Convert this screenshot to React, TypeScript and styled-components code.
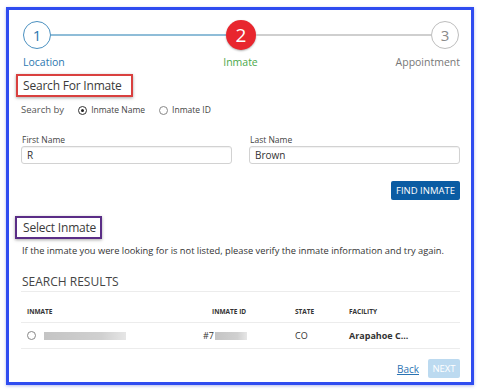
import React from 'react';
import styled, { createGlobalStyle } from 'styled-components';

const GlobalStyle = createGlobalStyle`
	body {
		margin: 0;
		background: #ffffff;
		font-family: 'Open Sans', 'Liberation Sans', sans-serif;
		color: #333;
	}
`;

const Page = styled.div`
	padding: 7px 5px 7px 6px;
`;

const Frame = styled.div`
	width: 468px;
	height: 378px;
	box-sizing: border-box;
	border: 3px solid #2f4cf0;
	box-shadow: 0 1px 3px rgba(40, 60, 200, 0.35);
	padding: 10px 11px 0 12px;
	display: flex;
	flex-direction: column;
`;

const StepRow = styled.div`
	display: flex;
	align-items: center;
	padding: 0 1px 0 2px;
`;

const Circle = styled.div<{ $state: 'done' | 'active' | 'todo' }>`
	width: 28px;
	height: 28px;
	box-sizing: border-box;
	border-radius: 50%;
	display: flex;
	align-items: center;
	justify-content: center;
	border: ${(p) => (p.$state === 'active' ? 'none' : '1.5px solid')};
	border-color: ${(p) => (p.$state === 'done' ? '#4a90c0' : '#bdbdbd')};
	background: ${(p) => (p.$state === 'active' ? '#e8262e' : '#fff')};
	color: ${(p) => (p.$state === 'active' ? '#fff' : p.$state === 'done' ? '#2d78b0' : '#8a8a8a')};
	font-size: ${(p) => (p.$state === 'active' ? '19px' : '15px')};
	box-shadow: ${(p) => (p.$state === 'active' ? '0 1px 2px rgba(0,0,0,0.3)' : 'none')};
	${(p) => p.$state === 'active' && 'width: 30px; height: 30px;'}
`;

const Connector = styled.div<{ $done?: boolean }>`
	flex: 1;
	height: 1.5px;
	background: ${(p) => (p.$done ? '#8fbdd8' : '#cfcfcf')};
`;

const LabelRow = styled.div`
	display: grid;
	grid-template-columns: 1fr auto 1fr;
	margin-top: 5px;
	font-size: 10.5px;
	line-height: 14px;
`;

const StepLabel = styled.div<{ $align: string; $color: string }>`
	justify-self: ${(p) => p.$align};
	color: ${(p) => p.$color};
	padding-left: ${(p) => (p.$align === 'start' ? '2px' : '0')};
`;

const Heading = styled.div<{ $box: string }>`
	align-self: flex-start;
	margin-top: 5px;
	margin-left: -5px;
	padding: 2px 9px 2px 5px;
	border: 2px solid ${(p) => p.$box};
	box-shadow: 0 1px 3px rgba(0, 0, 0, 0.35);
	font-size: 12px;
	letter-spacing: -0.2px;
	line-height: 15px;
	color: #3a3a3a;
`;

const SearchBy = styled.div`
	display: flex;
	align-items: center;
	margin-top: 6px;
	font-size: 9.5px;
	color: #555;
	line-height: 14px;
`;

const RadioOption = styled.label`
	display: flex;
	align-items: center;
	gap: 4px;
	margin-left: 14px;
	font-size: 8.5px;
	color: #444;
`;

const Radio = styled.span<{ $checked?: boolean }>`
	width: 7px;
	height: 7px;
	border-radius: 50%;
	border: 1px solid ${(p) => (p.$checked ? '#333' : '#888')};
	display: inline-flex;
	align-items: center;
	justify-content: center;
	&::after {
		content: '';
		width: 3px;
		height: 3px;
		border-radius: 50%;
		background: ${(p) => (p.$checked ? '#222' : 'transparent')};
	}
`;

const FieldGrid = styled.div`
	display: grid;
	grid-template-columns: 1fr 1fr;
	column-gap: 17px;
	margin-top: 17px;
`;

const Field = styled.div`
	display: flex;
	flex-direction: column;
`;

const FieldLabel = styled.div`
	font-size: 8.5px;
	line-height: 12px;
	color: #444;
	margin-bottom: 0;
	padding-left: 1px;
`;

const Input = styled.div`
	height: 18px;
	box-sizing: border-box;
	border: 1px solid #d2d2d2;
	border-radius: 3px;
	padding: 0 5px;
	font-size: 10px;
	line-height: 16px;
	color: #333;
	box-shadow: inset 0 1px 1px rgba(0, 0, 0, 0.06);
`;

const ActionRow = styled.div`
	display: flex;
	justify-content: flex-end;
	margin-top: 17px;
`;

const PrimaryButton = styled.button<{ $disabled?: boolean }>`
	height: 19px;
	padding: 0 5px;
	border: none;
	border-radius: 2px;
	font-family: inherit;
	font-size: 9.5px;
	color: #fff;
	background: ${(p) => (p.$disabled ? '#bcdaf0' : '#0b5ca3')};
`;

const SelectHeading = styled(Heading)`
	margin-top: 16px;
	margin-left: -6px;
	padding: 2px 4px 2px 6px;
`;

const Note = styled.p`
	margin: 5px 0 0;
	font-size: 9.3px;
	line-height: 13px;
	color: #333;
	padding-left: 1px;
	white-space: nowrap;
`;

const ResultsTitle = styled.div`
	margin-top: 17px;
	padding-left: 1px;
	font-size: 12px;
	line-height: 15px;
	color: #444;
	padding-bottom: 2px;
	border-bottom: 1.5px solid #ececec;
`;

const TableRow = styled.div<{ $head?: boolean }>`
	display: grid;
	grid-template-columns: 185px 83px 54px 1fr;
	align-items: center;
	height: ${(p) => (p.$head ? '31px' : '26px')};
	padding: ${(p) => (p.$head ? '8px 0 0 6px' : '0 0 0 6px')};
	box-sizing: border-box;
	border-bottom: 1.5px solid #ececec;
	font-size: ${(p) => (p.$head ? '6.5px' : '9px')};
	font-weight: ${(p) => (p.$head ? 700 : 400)};
	color: ${(p) => (p.$head ? '#444' : '#333')};
`;

const Cell = styled.div<{ $bold?: boolean; $shift?: number }>`
	display: flex;
	align-items: center;
	color: #333;
	font-weight: ${(p) => (p.$bold ? 700 : 'inherit')};
	margin-left: ${(p) => p.$shift ?? 0}px;
`;

const Redacted = styled.span<{ $w: number }>`
	display: inline-block;
	width: ${(p) => p.$w}px;
	height: 8px;
	margin-left: 8px;
	background: linear-gradient(90deg, #c4c4c4, #d0d0d0 70%, #e6e6e6);
	filter: blur(0.4px);
`;

const IdRedacted = styled(Redacted)`
	margin-left: 1px;
`;

const Footer = styled.div`
	display: flex;
	justify-content: flex-end;
	align-items: center;
	gap: 9px;
	margin-top: 10px;
`;

const BackLink = styled.a`
	font-size: 10px;
	color: #2b73b3;
	text-decoration: underline;
`;

const NextButton = styled(PrimaryButton)`
	height: 19px;
	width: 32px;
	padding: 0;
`;

export default function App() {
	return (
		<>
			<GlobalStyle />
			<Page>
				<Frame>
					<StepRow>
						<Circle $state="done">1</Circle>
						<Connector $done />
						<Circle $state="active">2</Circle>
						<Connector />
						<Circle $state="todo">3</Circle>
					</StepRow>
					<LabelRow>
						<StepLabel $align="start" $color="#2d78b0">Location</StepLabel>
						<StepLabel $align="center" $color="#4aa84a">Inmate</StepLabel>
						<StepLabel $align="end" $color="#777">Appointment</StepLabel>
					</LabelRow>

					<Heading $box="#d9403f">Search For Inmate</Heading>
					<SearchBy>
						Search by
						<RadioOption>
							<Radio $checked /> Inmate Name
						</RadioOption>
						<RadioOption>
							<Radio /> Inmate ID
						</RadioOption>
					</SearchBy>

					<FieldGrid>
						<Field>
							<FieldLabel>First Name</FieldLabel>
							<Input>R</Input>
						</Field>
						<Field>
							<FieldLabel>Last Name</FieldLabel>
							<Input>Brown</Input>
						</Field>
					</FieldGrid>
					<ActionRow>
						<PrimaryButton>FIND INMATE</PrimaryButton>
					</ActionRow>

					<SelectHeading $box="#5a2d86">Select Inmate</SelectHeading>
					<Note>
						If the inmate you were looking for is not listed, please verify the inmate information and try again.
					</Note>

					<ResultsTitle>SEARCH RESULTS</ResultsTitle>
					<TableRow $head>
						<Cell>INMATE</Cell>
						<Cell>INMATE ID</Cell>
						<Cell>STATE</Cell>
						<Cell>FACILITY</Cell>
					</TableRow>
					<TableRow>
						<Cell>
							<Radio />
							<Redacted $w={82} />
						</Cell>
						<Cell $shift={-9}>
							#7
							<IdRedacted $w={32} />
						</Cell>
						<Cell>CO</Cell>
						<Cell $bold>Arapahoe C...</Cell>
					</TableRow>

					<Footer>
						<BackLink>Back</BackLink>
						<NextButton $disabled>NEXT</NextButton>
					</Footer>
				</Frame>
			</Page>
		</>
	);
}
